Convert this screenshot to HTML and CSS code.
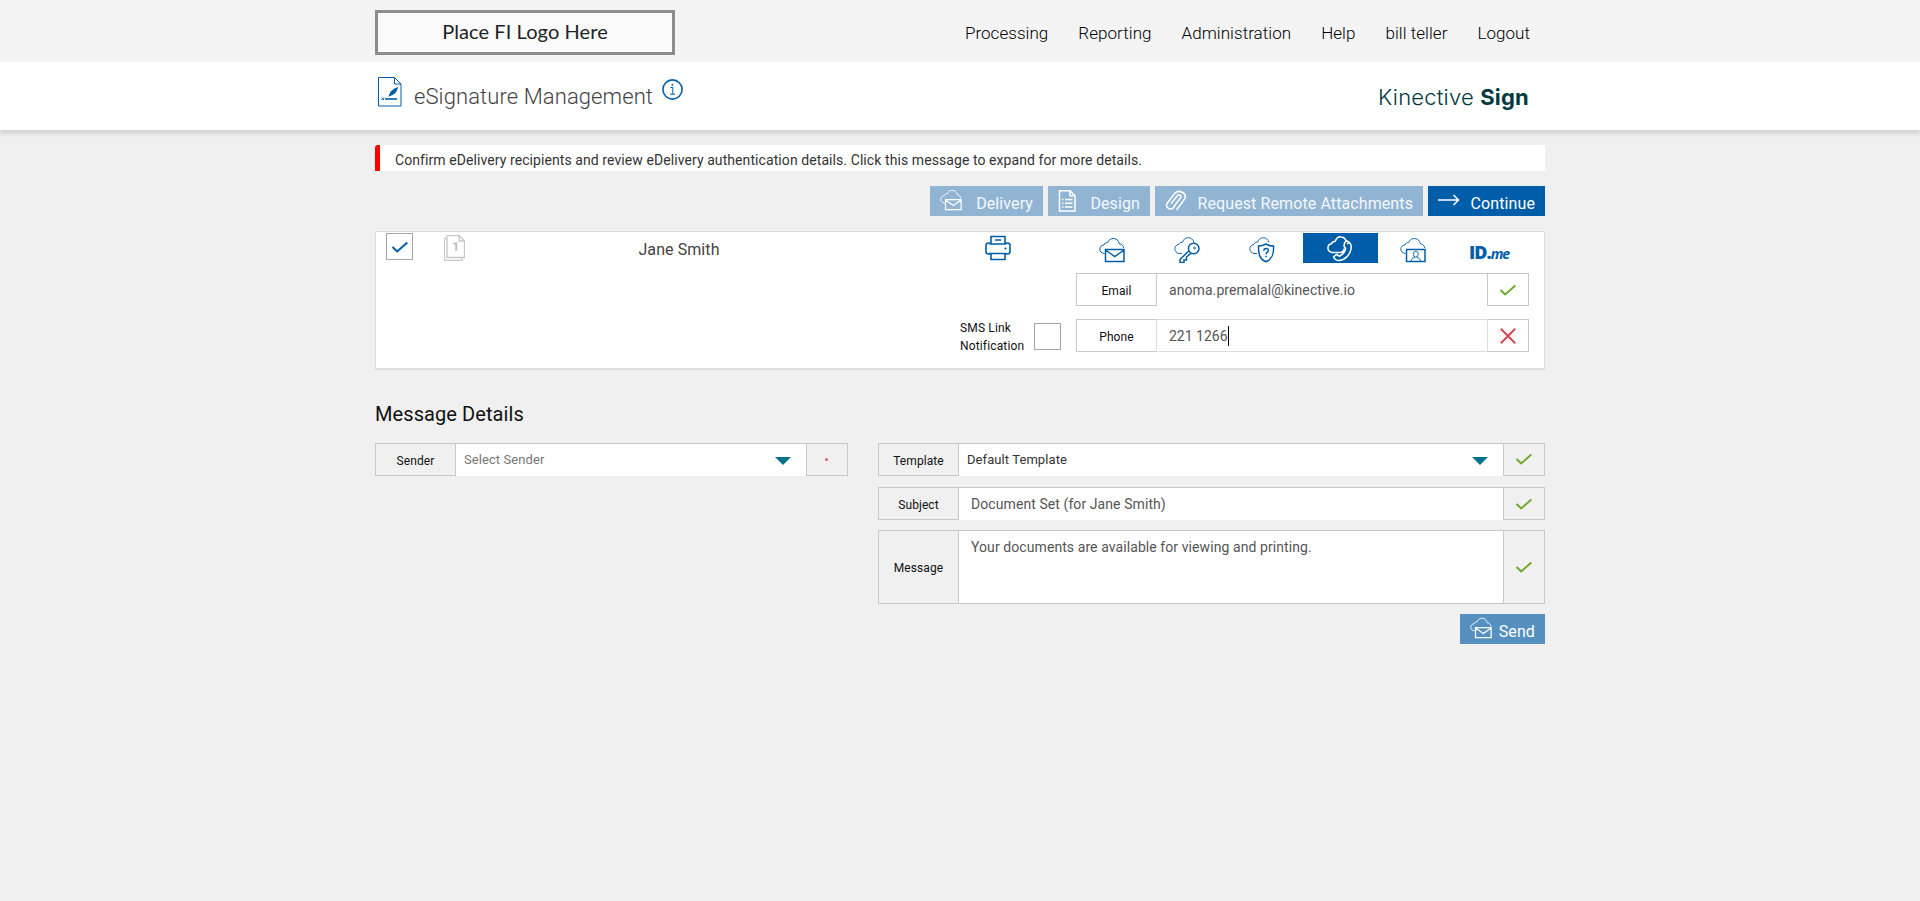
FILE: index.html
```html
<!DOCTYPE html>
<html lang="en">

<head>
	<meta charset="UTF-8">
	<meta name="viewport" content="width=device-width, initial-scale=1.0">
	<title>eSignature Management</title>
	<link rel="stylesheet" href="styles.css">
</head>

<body>

	<!-- shared icon shapes -->
	<svg class="sprite" width="0" height="0">
		<symbol id="cloud-mail" viewBox="0 0 26 26">
			<path class="thin" d="M5.500 16.500C2.500 16.200 .800 14.500 .800 12.200C.800 9.700 2.700 8 5 8C5.400 6.300 6.800 5.300 8.600 5.700C9.500 3 11.600 1.500 14.200 1.500C17.600 1.500 20 3.700 20.300 6.800C22.900 6.900 24.500 8.800 24.700 11" />
			<path d="M6.500 12.500h18.500v12h-18.500zM6.500 13l9.300 6.500l9.200-6.500" />
		</symbol>
		<symbol id="check" viewBox="0 0 18 12">
			<path d="M1.500 6L6.200 10.500L16.300 1.500" />
		</symbol>
	</svg>

	<header class="topbar">
		<div class="container topbar-inner">
			<div class="fi-logo"><span>Place FI Logo Here</span></div>
			<nav class="nav">
				<a href="#">Processing</a>
				<a href="#">Reporting</a>
				<a href="#">Administration</a>
				<a href="#">Help</a>
				<a href="#">bill teller</a>
				<a href="#">Logout</a>
			</nav>
		</div>
	</header>

	<div class="titlebar">
		<div class="container titlebar-inner">
			<svg class="icon title-icon" width="24" height="30" viewBox="0 0 24 30">
				<path class="thin" d="M.500 .500h16l6.500 6.500v22h-22.500zM16.500 .500v6.500h6.500" />
				<path d="M7 22h12" />
				<path class="thin" d="M3.500 20.500l2.500 2.500M6 20.500l-2.500 2.500" />
				<path class="solid" d="M20 10C17 11 13 13 11.500 17L10.300 19.800L14 18.300C17.500 17 19.500 13.500 20 10z" />
			</svg>
			<h1>eSignature Management</h1>
			<svg class="icon info-icon" width="21" height="21" viewBox="0 0 21 21">
				<circle cx="10.500" cy="10.500" r="9.600" />
				<path class="thin" d="M8.500 8.500h2.300v6.500M8 15.200h5" />
				<circle class="solid" cx="10.400" cy="5.800" r="1" />
			</svg>
			<div class="brand">Kinective <b>Sign</b></div>
		</div>
	</div>

	<main class="container">
		<div class="notice">Confirm eDelivery recipients and review eDelivery authentication details. Click this message to expand for more details.</div>

		<div class="toolbar">
			<button class="btn btn-delivery disabled">
				<svg class="icon" width="22" height="22"><use href="#cloud-mail" /></svg>
				<span>Delivery</span>
			</button>
			<button class="btn btn-design disabled">
				<svg class="icon" width="18" height="22" viewBox="0 0 18 22">
					<path d="M1.500 .800h10.500l5 5v15.200h-15.500zM12 .800v5h5M7 9.500h7.500M7 13.200h7.500M7 17h7.500M4 9.500h1.500M4 13.200h1.500M4 17h1.500" />
				</svg>
				<span>Design</span>
			</button>
			<button class="btn btn-attach disabled">
				<svg class="icon" width="22" height="22" viewBox="0 0 22 22">
					<path d="M6.200 13.500L12.500 5.500C14 3.600 17 5.600 15.600 7.800L8.200 17.700C5.800 20.700 -.200 17.800 2.200 13.200L9.500 3.600C13.500 -1.200 22.500 3 19.600 9L11.500 20" />
				</svg>
				<span>Request Remote Attachments</span>
			</button>
			<button class="btn btn-continue">
				<svg class="icon" width="22" height="12" viewBox="0 0 22 12">
					<path d="M0 6h20.500M15.500 1l5 5l-5 5" />
				</svg>
				<span>Continue</span>
			</button>
		</div>

		<section class="recipient">
			<div class="checkbox">
				<svg class="icon" width="18" height="12"><use href="#check" /></svg>
			</div>
			<svg class="docs-icon" width="21" height="26" viewBox="0 0 21 26">
				<path d="M3 3.500h-2.500v22h17.500v-3M3 .500h12l5.500 5.500v16.500h-17.500zM15 .500v5.500h5.500" />
				<text x="8.300" y="16">1</text>
			</svg>
			<div class="recipient-name">Jane Smith</div>
			<svg class="icon print-icon" width="26" height="26" viewBox="0 0 26 26">
				<path d="M6 9V1.500h14V9M4.500 9h17M5.500 19h-2c-1.500 0-2.500-1-2.500-2.500v-6c0-1.500 1-2.500 2.500-2.500h1.500M21 8h1.500c1.500 0 2.500 1 2.500 2.500v6c0 1.500-1 2.500-2.500 2.500h-2M4 18.500h18M6 18.500v6h14v-6M10 5h6" />
				<circle class="solid" cx="20.500" cy="13.500" r="1.100" />
			</svg>

			<div class="delivery">
				<div class="methods">
					<div class="method">
						<svg class="icon" width="26" height="26"><use href="#cloud-mail" /></svg>
					</div>
					<div class="method">
						<svg class="icon" width="26" height="26" viewBox="0 0 26 26">
							<path class="thin" d="M8 16.500H5C-.500 15.500-.500 8 4.800 7.500C5.300 5.800 6.500 5.100 8.500 5.300C9.500 2 12 .500 14.500 .700C17.500 .800 19.500 3 20 5.500" />
							<circle cx="19.700" cy="11.500" r="5.300" />
							<circle class="thin" cx="20.500" cy="11" r="1" />
							<path d="M14.700 14L6 22.500V25.500h4v-2.500h2.500v-3L17 16.300" />
						</svg>
					</div>
					<div class="method">
						<svg class="icon" width="26" height="26" viewBox="0 0 26 26">
							<path class="thin" d="M8 16.500H5C-.500 15.500-.500 8 4.800 7.500C5.300 5.800 6.500 5.100 8.500 5.300C9.500 2 12 .500 14.500 .700C17.500 .800 19.500 3 20 5.500" />
							<path d="M17 7C14.500 8.500 12 9 9.500 9C9.300 17 10.500 22 17 24.800C23.500 22 25 17 24.500 9C22 9 19.500 8.500 17 7z" />
							<path d="M14.800 13.800c0-3 4.600-3 4.600-.400c0 1.800-2.300 1.700-2.300 3.800M17.100 18.800v1.400" />
						</svg>
					</div>
					<div class="method active">
						<svg class="icon" width="26" height="26" viewBox="0 0 26 26">
							<path d="M8 16.500H5C-.300 15.500-.300 8.500 4.500 7.700C5.300 5.800 6.500 5.300 8.200 5.300C9.500 2 12 .700 14 .900C17 1 18.500 3 19 4.800M17.500 7l2-2.300c3.500 1.300 5.300 4.300 4.500 8.500C23 18.700 17.500 24.300 12 24.500C9.500 24.500 7.500 23 6.500 21L9.500 18.500L12.300 20.200C15.500 18.800 18.200 15.500 18.700 12.200L17 10.300zM8 16.500h5.500C16 16 17 14.500 17 12.500M20 8l2.300-1.700" />
						</svg>
					</div>
					<div class="method method-id">
						<svg class="icon" width="26" height="26" viewBox="0 0 26 26">
							<path class="thin" d="M5.500 16.500C2.500 16.200 .800 14.500 .800 12.200C.800 9.700 2.700 8 5 8C5.400 6.300 6.800 5.300 8.600 5.700C9.500 3 11.600 1.500 14.200 1.500C17.600 1.500 20 3.700 20.300 6.800C22.900 6.900 24.500 8.800 24.700 11" />
							<path d="M6.500 12.500h18.500v12h-18.500z" />
							<ellipse class="thin" cx="15.800" cy="17.200" rx="2.500" ry="2.900" />
							<path class="thin" d="M11.200 24.300c0-2.500 1.500-3.300 3.200-3.500v-1M20.400 24.300c0-2.500-1.500-3.300-3.200-3.500v-1" />
						</svg>
					</div>
					<div class="method idme"><b>ID.</b><i>me</i></div>
				</div>

				<div class="field">
					<label class="field-label">Email</label>
					<div class="field-value"><span>anoma.premalal@kinective.io</span></div>
					<div class="field-status"><svg class="ok" width="18" height="12"><use href="#check" /></svg></div>
				</div>

				<div class="phone-row">
					<div class="sms">
						<span>SMS Link<br>Notification</span>
						<div class="checkbox"></div>
					</div>
					<div class="field focused">
						<label class="field-label">Phone</label>
						<div class="field-value"><span class="typing">221 1266</span></div>
						<div class="field-status">
							<svg class="bad" width="16" height="16" viewBox="0 0 16 16"><path d="M.800 .800l14.400 14.400M15.200 .800l-14.400 14.400" /></svg>
						</div>
					</div>
				</div>
			</div>
		</section>

		<h2>Message Details</h2>

		<div class="details">
			<div class="details-left">
				<div class="field">
					<label class="field-label">Sender</label>
					<div class="field-value select placeholder"><span>Select Sender</span><i class="arrow"></i></div>
					<div class="field-status"><i class="dot"></i></div>
				</div>
			</div>
			<div class="details-right">
				<div class="field field-template">
					<label class="field-label">Template</label>
					<div class="field-value select"><span>Default Template</span><i class="arrow"></i></div>
					<div class="field-status"><svg class="ok" width="18" height="12"><use href="#check" /></svg></div>
				</div>
				<div class="field field-subject">
					<label class="field-label">Subject</label>
					<div class="field-value"><span>Document Set (for Jane Smith)</span></div>
					<div class="field-status"><svg class="ok" width="18" height="12"><use href="#check" /></svg></div>
				</div>
				<div class="field field-message">
					<label class="field-label">Message</label>
					<div class="field-value"><span>Your documents are available for viewing and printing.</span></div>
					<div class="field-status"><svg class="ok" width="18" height="12"><use href="#check" /></svg></div>
				</div>
				<button class="btn btn-send">
					<svg class="icon" width="22" height="22"><use href="#cloud-mail" /></svg>
					<span>Send</span>
				</button>
			</div>
		</div>
	</main>

</body>

</html>
```
FILE: styles.css
```css
/* Basic reset */
* {
	margin: 0;
	padding: 0;
	box-sizing: border-box;
}

body {
	background-color: #f0f0f0;
	font-family: Roboto, Arial, sans-serif;
	font-size: 14px;
	letter-spacing: 0.08px;
	color: #111;
}

.sprite {
	display: block;
}

.container {
	width: 1170px;
	margin: 0 auto;
}

.icon {
	flex: none;
	fill: none;
	stroke: #005da9;
	stroke-width: 1.6;
}

.thin {
	stroke-width: 1;
}

.solid {
	fill: #005da9;
	stroke: none;
}

/* Top bar */
.topbar {
	height: 62px;
	background-color: #f4f4f4;
}

.topbar-inner {
	display: flex;
	justify-content: space-between;
	padding-top: 10px;
}

.fi-logo {
	width: 300px;
	height: 45px;
	border: 3px solid #8d8d8d;
	background-color: #fafafa;
	color: #222;
	font-family: Lato, sans-serif;
	font-size: 20px;
	line-height: 37px;
	text-align: center;
}

.nav {
	display: flex;
	gap: 30px;
	padding: 12px 15px 0 0;
}

.nav a {
	color: #000;
	font-size: 17px;
	font-weight: 300;
	line-height: 22px;
	letter-spacing: 0.05px;
	text-decoration: none;
}

/* Page title */
.titlebar {
	height: 68px;
	background-color: #fff;
	box-shadow: 0 4px 4px rgba(0, 0, 0, 0.12);
}

.titlebar-inner {
	display: flex;
	align-items: flex-start;
	padding: 15px 17px 0 3px;
}

h1 {
	margin: 5px 9px 0 12px;
	color: #444;
	font-size: 22px;
	font-weight: 300;
	line-height: 30px;
	letter-spacing: 0.1px;
}

.info-icon {
	margin-top: 2px;
}

.brand {
	margin: 5px -1px 0 auto;
	color: #003a40;
	font-family: Inter, sans-serif;
	font-size: 22px;
	font-weight: 300;
	line-height: 30px;
	letter-spacing: 0.2px;
}

.brand b {
	font-weight: 700;
}

/* Notice */
.notice {
	height: 26px;
	margin-top: 15px;
	padding-left: 15px;
	border-left: 5px solid #f00;
	border-radius: 3px 3px 0 0;
	background-color: #fff;
	color: #333;
	line-height: 30px;
}

/* Buttons */
.toolbar {
	display: flex;
	justify-content: flex-end;
	gap: 5px;
	margin: 15px 0;
}

.btn {
	display: flex;
	align-items: flex-start;
	height: 30px;
	padding: 4px 10px 0;
	border: none;
	background-color: #005da9;
	color: #fff;
	font-family: inherit;
	font-size: 16px;
	line-height: 27px;
	letter-spacing: 0.1px;
	white-space: nowrap;
	cursor: pointer;
}

.btn .icon {
	stroke: #fff;
	stroke-width: 1.5;
}

.btn span {
	margin-left: auto;
}

.disabled {
	background-color: #91b4d3;
	color: #f4f8fb;
}

.btn-delivery {
	width: 113px;
}

.btn-delivery .icon,
.btn-send .icon {
	margin-top: -1px;
}

.btn-design {
	width: 102px;
}

.btn-attach {
	width: 268px;
}

.btn-continue {
	width: 117px;
}

.btn-continue .icon {
	margin-top: 4px;
}

.btn-send {
	width: 85px;
	margin: 10px 0 0 auto;
	background-color: #5590c1;
}

/* Recipient panel */
.recipient {
	display: flex;
	align-items: flex-start;
	height: 139px;
	padding: 1px 15px 0 10px;
	border: 1px solid #ddd;
	border-bottom-width: 2px;
	background-color: #fff;
}

.checkbox {
	display: flex;
	align-items: center;
	justify-content: center;
	flex: none;
	width: 27px;
	height: 27px;
	border: 1px solid #a5a5a5;
	background-color: #fff;
}

.checkbox .icon {
	stroke-width: 2;
}

.docs-icon {
	margin: 2px 0 0 31px;
	fill: none;
	stroke: #c8c8c8;
	stroke-width: 1.3;
}

.docs-icon text {
	fill: #bbb;
	stroke: none;
	font-size: 12px;
	font-weight: 700;
}

.recipient-name {
	width: 428px;
	color: #444;
	font-size: 16px;
	line-height: 34px;
	text-align: center;
}

.print-icon {
	margin: 2px 0 0 92px;
}

.delivery {
	display: flex;
	flex-direction: column;
	align-items: flex-end;
	width: 453px;
	margin-left: auto;
}

.methods {
	display: flex;
	width: 451px;
	margin-bottom: 10px;
}

.method {
	width: 75px;
	height: 30px;
	padding: 4px 0 0 21px;
}

.method .icon {
	stroke-width: 1.5;
}

.method .thin {
	stroke-width: 0.9;
}

.active {
	padding: 3px 0 0 24px;
	background-color: #005da9;
}

.active .icon {
	stroke: #fff;
}

.method-id {
	padding-left: 22px;
}

.idme {
	padding: 8px 0 0 16px;
	color: #005da9;
	font-family: "Open Sans", sans-serif;
	font-size: 18px;
	line-height: 22px;
	letter-spacing: -1px;
	white-space: nowrap;
}

.idme b {
	font-weight: 800;
}

.idme i {
	font-family: "Noto Sans", sans-serif;
	font-size: 14px;
	font-weight: 700;
}

/* Form fields */
.field {
	display: grid;
	grid-template-columns: 79px 1fr 40px;
	height: 33px;
	border: 1px solid #c8c8c8;
}

.delivery .field {
	flex: none;
	width: 453px;
}

.field-label {
	display: flex;
	align-items: center;
	justify-content: center;
	padding-top: 2px;
	font-size: 12px;
}

.field-value {
	padding-left: 12px;
	border-left: 1px solid #c8c8c8;
	border-right: 1px solid #c8c8c8;
	background-color: #fff;
	color: #555;
	line-height: 32px;
}

.field-status {
	display: flex;
	align-items: center;
	justify-content: center;
}

.focused .field-value {
	height: 33px;
	margin-top: -1px;
	border: 1px solid #ddd;
}

.typing {
	padding: 2px 0;
	border-right: 1px solid #000;
	letter-spacing: 0;
}

.select {
	display: flex;
	align-items: center;
	justify-content: space-between;
	padding: 0 15px 0 8px;
	color: #333;
	font-size: 13px;
}

.placeholder {
	color: #777;
}

.arrow {
	margin-top: 2px;
	border: 8px solid transparent;
	border-top-color: #00728a;
	border-bottom-width: 0;
}

.dot {
	width: 3px;
	height: 3px;
	margin: 0 2px 2px 0;
	border-radius: 50%;
	background-color: #d9606b;
}

.ok {
	fill: none;
	stroke: #6fa92c;
	stroke-width: 2;
}

.bad {
	fill: none;
	stroke: #dc4450;
	stroke-width: 2;
}

.phone-row {
	display: flex;
	align-items: flex-start;
	justify-content: space-between;
	width: 569px;
	height: 33px;
	margin-top: 13px;
}

.sms {
	display: flex;
	gap: 10px;
	padding-top: 4px;
	font-size: 12px;
	line-height: 18px;
}

.sms span {
	width: 64px;
	margin-top: -4px;
	letter-spacing: 0.15px;
	white-space: nowrap;
}

/* Message details */
h2 {
	margin: 30px 0 14px;
	font-size: 20px;
	font-weight: 400;
	line-height: 29px;
}

.details {
	display: grid;
	grid-template-columns: 473px 667px;
	gap: 30px;
}

.field-template .field-status {
	padding-bottom: 2px;
}

.field-subject {
	margin-top: 11px;
}

.field-message {
	height: 74px;
	margin-top: 10px;
}
```
